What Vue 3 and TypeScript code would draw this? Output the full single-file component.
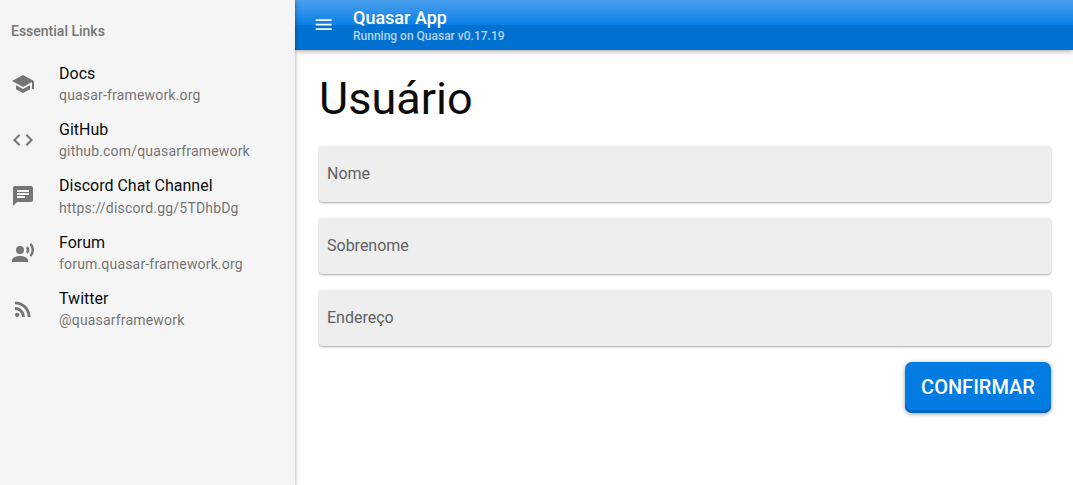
<script setup lang="ts">
interface LinkItem { title: string; sub: string; paths: string[]; circle?: number[] }
const links: LinkItem[] = [
  { title: 'Docs', sub: 'quasar-framework.org', paths: ['M5 13.18v4L12 21l7-3.82v-4L12 17l-7-3.82zM12 3L1 9l11 6 9-4.91V17h2V9L12 3z'] },
  { title: 'GitHub', sub: 'github.com/quasarframework', paths: ['M9.4 16.6L4.8 12l4.6-4.6L8 6l-6 6 6 6 1.4-1.4zm5.2 0l4.6-4.6-4.6-4.6L16 6l6 6-6 6-1.4-1.4z'] },
  { title: 'Discord Chat Channel', sub: 'https://discord.gg/5TDhbDg', paths: ['M20 2H4c-1.1 0-1.99.9-1.99 2L2 22l4-4h14c1.1 0 2-.9 2-2V4c0-1.1-.9-2-2-2zM6 9h12v2H6V9zm8 5H6v-2h8v2zm4-6H6V6h12v2z'] },
  { title: 'Forum', sub: 'forum.quasar-framework.org', circle: [9, 9, 4], paths: ['M9 15c-2.67 0-8 1.34-8 4v2h16v-2c0-2.66-5.33-4-8-4zm7.76-9.64l-1.68 1.69c.84 1.18.84 2.71 0 3.89l1.68 1.69c2.02-2.02 2.02-5.07 0-7.27zM20.07 2l-1.63 1.63c2.77 3.02 2.77 7.56 0 10.74L20.07 16c3.9-3.89 3.91-9.95 0-14z'] },
  { title: 'Twitter', sub: '@quasarframework', circle: [6.18, 17.82, 2.18], paths: ['M4 4.44v2.83c7.03 0 12.73 5.7 12.73 12.73h2.83c0-8.59-6.97-15.56-15.56-15.56zm0 5.66v2.83c3.9 0 7.07 3.17 7.07 7.07h2.83c0-5.47-4.43-9.9-9.9-9.9z'] },
]
const fields: string[] = ['Nome', 'Sobrenome', 'Endereço']
</script>

<template>
  <div class="layout">
    <aside class="drawer">
      <div class="list-header">Essential Links</div>
      <a v-for="l in links" :key="l.title" class="item">
        <svg class="item-icon" viewBox="0 0 24 24" width="24" height="24">
          <circle v-if="l.circle" :cx="l.circle[0]" :cy="l.circle[1]" :r="l.circle[2]" />
          <path v-for="p in l.paths" :key="p" :d="p" />
        </svg>
        <div class="item-text">
          <div class="item-title">{{ l.title }}</div>
          <div class="item-sub">{{ l.sub }}</div>
        </div>
      </a>
    </aside>
    <div class="main">
      <header class="toolbar">
        <svg class="menu" viewBox="0 0 24 24" width="21.33" height="21.33">
          <path d="M3 18h18v-2H3v2zm0-5h18v-2H3v2zm0-7v2h18V6H3z" />
        </svg>
        <div class="toolbar-title">
          <div class="app-name">Quasar App</div>
          <div class="app-sub">Running on Quasar v0.17.19</div>
        </div>
      </header>
      <main class="page">
        <h3 class="heading">Usuário</h3>
        <div v-for="f in fields" :key="f" class="field">{{ f }}</div>
        <div class="actions">
          <button class="confirm" type="button">CONFIRMAR</button>
        </div>
      </main>
    </div>
  </div>
</template>

<style>
html, body { margin: 0; background: #fff; overflow: hidden; }
</style>

<style scoped>
.layout {
  display: flex;
  height: 485px;
  overflow: hidden;
  font-family: Roboto, "Liberation Sans", sans-serif;
  color: #0c0c0c;
}
.drawer {
  width: 295px;
  flex: none;
  box-sizing: border-box;
  background: #f5f5f5;
  box-shadow: 0 0 4px rgba(0, 0, 0, 0.4);
  padding-top: 8px;
  position: relative;
  z-index: 2;
}
.list-header {
  height: 47.875px;
  display: flex;
  align-items: center;
  padding-left: 11px;
  padding-bottom: 2px;
  box-sizing: border-box;
  font-size: 14px;
  font-weight: 500;
  color: #757575;
}
.item {
  display: flex;
  align-items: center;
  height: 56.25px;
  padding-left: 11px;
  box-sizing: border-box;
}
.item-icon {
  fill: #757575;
  flex: none;
  margin-right: 24px;
  margin-bottom: 0.5px;
}
.item-title {
  font-size: 16px;
  line-height: 21px;
}
.item-sub {
  font-size: 14px;
  line-height: 20px;
  margin-top: 1.2px;
  letter-spacing: 0.18px;
  color: #757575;
}
.main {
  flex: 1;
  min-width: 0;
  display: flex;
  flex-direction: column;
}
.toolbar {
  height: 50px;
  flex: none;
  display: flex;
  align-items: center;
  color: #fff;
  background: linear-gradient(to bottom, #4a9fec 0, #0a7fe6 50%, #0071d1 50%, #0071d1 100%);
  box-shadow: 0 1px 5px rgba(0, 0, 0, 0.4);
  position: relative;
  z-index: 1;
}
.menu {
  fill: #fff;
  margin-left: 18.33px;
  flex: none;
}
.toolbar-title {
  margin-left: 18.33px;
}
.app-name {
  font-size: 18px;
  font-weight: 500;
  line-height: 20px;
  margin-bottom: 2px;
}
.app-sub {
  font-size: 12px;
  font-weight: 500;
  line-height: 13px;
  color: rgba(255, 255, 255, 0.7);
}
.page {
  flex: 1;
  padding: 0 22px 0 24px;
}
.heading {
  margin: 0;
  height: 96px;
  font-size: 45px;
  font-weight: 400;
  line-height: 98px;
  color: #0c0c0c;
}
.field {
  height: 56px;
  box-sizing: border-box;
  margin-bottom: 16px;
  padding-left: 8px;
  padding-bottom: 2px;
  display: flex;
  align-items: center;
  font-size: 16px;
  color: #616161;
  background: #eeeeee;
  border-radius: 3px;
  box-shadow: 0 1px 2px rgba(0, 0, 0, 0.35);
}
.actions {
  display: flex;
  justify-content: flex-end;
}
.confirm {
  width: 146px;
  height: 51px;
  border: 0;
  border-radius: 7px;
  font-family: inherit;
  font-size: 20px;
  font-weight: 500;
  color: #fff;
  background: #027be3;
  box-shadow: inset 0 -3px 0 #0068c4, 0 1px 4px rgba(0, 0, 0, 0.4);
  padding: 0 0 2px;
}
</style>
